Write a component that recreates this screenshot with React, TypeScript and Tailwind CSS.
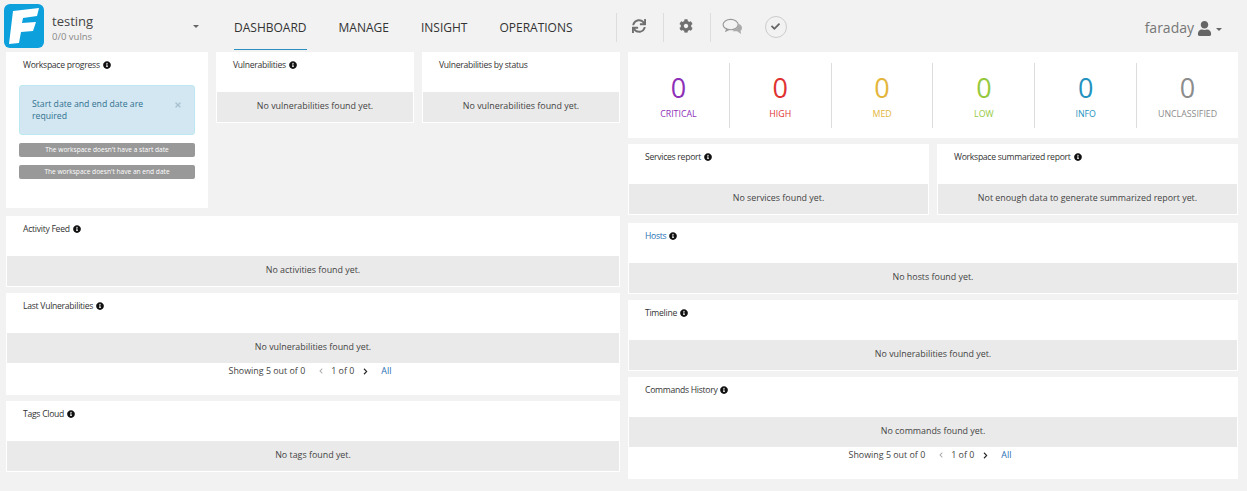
import { FaChevronLeft, FaChevronRight, FaCheck, FaCog, FaInfoCircle, FaSync, FaTimes, FaUser } from "react-icons/fa";

function Info() {
  return <FaInfoCircle className="ml-[3px] inline-block align-[-1px] text-[8px] text-[#111]" />;
}

type PanelProps = {
  title: string;
  empty: string;
  className?: string;
  link?: boolean;
  pager?: boolean;
  noInfo?: boolean;
};

function Panel({ title, empty, className = "", link, pager, noInfo }: PanelProps) {
  return (
    <div className={`border-x border-b border-white bg-white ${className}`}>
      <div className={`h-10 pl-4 pt-[6px] text-[8.6px] leading-[14px] tracking-[-0.27px] ${link ? "text-[#1f6fb5]" : "text-[#333]"}`}>
        {title}
        {!noInfo && <Info />}
      </div>
      <div className="flex h-[30px] items-center justify-center bg-[#eaeaea] pb-[2px] text-[8.9px] text-[#444]">{empty}</div>
      {pager && (
        <div className="flex h-[31px] items-start justify-center pr-[6px] pt-px text-[8.9px] leading-[14px] text-[#444]">
          <span>Showing 5 out of 0</span>
          <FaChevronLeft className="ml-[13px] mr-[7px] mt-[4px] text-[6px] text-[#aaa]" />
          <span>1 of 0</span>
          <FaChevronRight className="ml-[8px] mr-[12px] mt-[4px] text-[7px] text-[#222]" />
          <span className="text-[#1f6fb5]">All</span>
        </div>
      )}
    </div>
  );
}

const stats = [
  { label: "CRITICAL", color: "text-[#8e2fb8]" },
  { label: "HIGH", color: "text-[#e03232]" },
  { label: "MED", color: "text-[#e3b53a]" },
  { label: "LOW", color: "text-[#95c93d]" },
  { label: "INFO", color: "text-[#2492be]" },
  { label: "UNCLASSIFIED", color: "text-[#8c8c8c]" },
];

function Stats() {
  return (
    <div className="flex h-[86px] items-center bg-white">
      {stats.map((s, i) => (
        <div
          key={s.label}
          className={`flex h-[65px] flex-1 flex-col items-center pt-[7px] ${i < 5 ? "border-r border-[#ddd]" : ""} ${s.color}`}
        >
          <span className="text-[27px] leading-[36px]">0</span>
          <span className="mt-px text-[8.8px] leading-[14px]">{s.label}</span>
        </div>
      ))}
    </div>
  );
}

function Header() {
  return (
    <div className="flex h-[52px] items-start text-[#555]">
      <svg viewBox="0 0 40 44" className="ml-1 mt-1 h-11 w-10 shrink-0">
        <rect width="40" height="44" rx="6" fill="#0ca0dc" />
        <path d="M9 7L35 4l-2 8-14 2-1 5 14-1-3 9-12 1-2 11-10 1z" fill="#fff" />
      </svg>
      <div className="ml-2 mt-[11px] w-[140px]">
        <div className="text-[13px] leading-[20px] text-[#444]">testing</div>
        <div className="text-[9.5px] leading-[12px] text-[#888]">0/0 vulns</div>
      </div>
      <span className="ml-[1px] mt-[25px] h-0 w-0 border-x-[3px] border-t-[3px] border-x-transparent border-t-[#666]" />
      <nav className="ml-[35px] flex gap-8 text-[12px] text-[#333]">
        <a className="h-[50px] border-b border-[#2b8fc0] pt-[19px] leading-[18px]">DASHBOARD</a>
        <a className="pt-[19px] leading-[18px]">MANAGE</a>
        <a className="pt-[19px] leading-[18px]">INSIGHT</a>
        <a className="pt-[19px] leading-[18px]">OPERATIONS</a>
      </nav>
      <div className="ml-[43px] mt-[13px] flex h-[29px] items-center">
        <div className="flex h-full w-[47px] items-center justify-center border-l border-[#ddd] pb-[3px] pr-[2px]">
          <FaSync className="text-[14px] text-[#707070]" />
        </div>
        <div className="flex h-full w-[47px] items-center justify-center border-l border-[#ddd] pb-[3px] pr-[2px]">
          <FaCog className="text-[14px] text-[#707070]" />
        </div>
        <div className="flex h-full w-[55px] items-center border-l border-[#ddd] pb-[2px] pl-[11px]">
          <svg viewBox="0 0 22 18" className="h-[17px] w-[21px]">
            <ellipse cx="9" cy="7" rx="8" ry="5.5" fill="none" stroke="#999" strokeWidth="1.2" />
            <path d="M5 11l-1 3 4-2" fill="none" stroke="#999" strokeWidth="1.2" />
            <path d="M17 6c3 1 4.500 3 4 5-.3 1.500-1 2-1.500 2.500l.5 3.500-4-3h-5l2-2c2 0 4-2 4-6z" fill="#aaa" />
          </svg>
        </div>
        <div className="mb-[2px] flex h-[22px] w-[22px] items-center justify-center rounded-full border border-[#ccc]">
          <FaCheck className="text-[9px] text-[#666]" />
        </div>
      </div>
      <div className="ml-auto mr-[25px] mt-[18px] flex items-center text-[14px] leading-[20px] text-[#777]">
        faraday
        <FaUser className="ml-[3px] text-[15px] text-[#666]" />
        <span className="ml-[4px] mt-[2px] h-0 w-0 border-x-[3px] border-t-[3px] border-x-transparent border-t-[#666]" />
      </div>
    </div>
  );
}

export default function App() {
  return (
    <div className="h-[491px] w-[1247px] overflow-hidden bg-[#f2f2f2] font-['Open_Sans',sans-serif]">
      <Header />
      <div className="flex">
        <div className="ml-[6px] w-[614px]">
          <div className="flex items-start">
            <div className="h-[156px] w-[202px] bg-white px-[13px]">
              <div className="h-[33px] pl-[4px] pt-[6px] text-[8.6px] leading-[14px] tracking-[-0.27px] text-[#333]">
                Workspace progress
                <Info />
              </div>
              <div className="flex h-[50px] items-start justify-between rounded-[3px] border border-[#bce8f1] bg-[#d2e7f2] pl-[12px] pr-[12px] pt-[12px] text-[8.7px] leading-[12px] text-[#31708f]">
                <span className="w-[125px]">Start date and end date are required</span>
                <FaTimes className="mt-[3px] text-[8px] text-[#a9c3d0]" />
              </div>
              <div className="mt-2 flex h-[14px] items-center justify-center rounded-[2px] bg-[#999] text-[6.6px] text-white">
                The workspace doesn't have a start date
              </div>
              <div className="mt-2 flex h-[14px] items-center justify-center rounded-[2px] bg-[#999] text-[6.6px] text-white">
                The workspace doesn't have an end date
              </div>
            </div>
            <Panel title="Vulnerabilities" empty="No vulnerabilities found yet." className="ml-2 w-[198px]" />
            <Panel title="Vulnerabilities by status" noInfo empty="No vulnerabilities found yet." className="ml-2 w-[198px]" />
          </div>
          <Panel title="Activity Feed" empty="No activities found yet." className="mt-2" />
          <Panel title="Last Vulnerabilities" empty="No vulnerabilities found yet." className="mt-[6px]" pager />
          <Panel title="Tags Cloud" empty="No tags found yet." className="mt-[6px]" />
        </div>
        <div className="ml-2 w-[610px]">
          <Stats />
          <div className="mt-[6px] flex gap-2">
            <Panel title="Services report" empty="No services found yet." className="w-[301px]" />
            <Panel
              title="Workspace summarized report"
              empty="Not enough data to generate summarized report yet."
              className="w-[301px]"
            />
          </div>
          <Panel title="Hosts" link empty="No hosts found yet." className="mt-2" />
          <Panel title="Timeline" empty="No vulnerabilities found yet." className="mt-[6px]" />
          <Panel title="Commands History" empty="No commands found yet." className="mt-[6px]" pager />
        </div>
      </div>
    </div>
  );
}
